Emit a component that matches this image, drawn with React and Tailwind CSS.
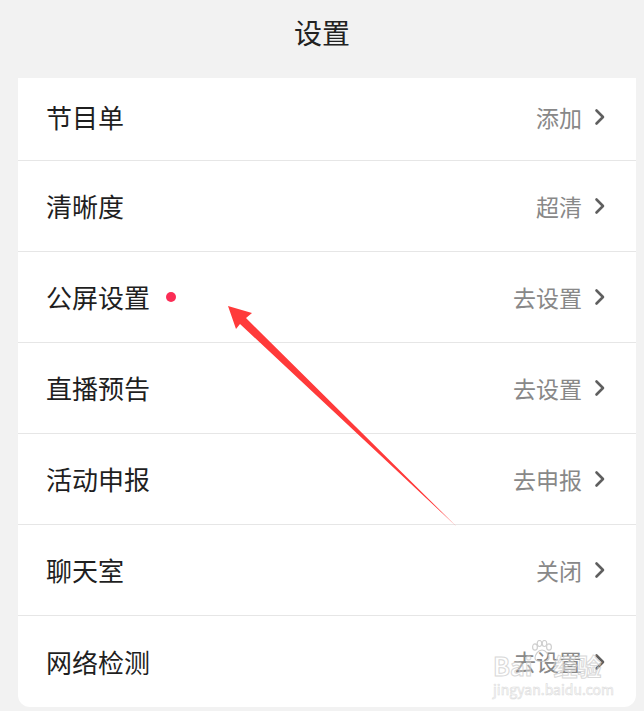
const rows = [
  { label: "节目单", value: "添加" },
  { label: "清晰度", value: "超清" },
  { label: "公屏设置", value: "去设置", dot: true },
  { label: "直播预告", value: "去设置" },
  { label: "活动申报", value: "去申报" },
  { label: "聊天室", value: "关闭" },
  { label: "网络检测", value: "去设置" },
];

function Chevron() {
  return (
    <svg width="12" height="18" viewBox="0 0 12 18" fill="none" className="ml-[12px]">
      <path d="M2.5 2.5l6.5 6.5-6.5 6.5" stroke="#5f5f5f" strokeWidth="2.6" strokeLinecap="round" strokeLinejoin="round" />
    </svg>
  );
}

function Paw() {
  return (
    <svg width="22" height="34" viewBox="0 0 22 34" fill="none" stroke="#c4c4c4" strokeWidth="1.2">
      <ellipse cx="4" cy="7" rx="2.4" ry="3.2" />
      <ellipse cx="8.5" cy="3.5" rx="2.3" ry="3" />
      <ellipse cx="13.5" cy="3.5" rx="2.3" ry="3" />
      <ellipse cx="18" cy="7" rx="2.4" ry="3.2" />
      <path d="M11 10c-4 0-7 5-7 8 0 3 3 3.5 7 3.5s7-.5 7-3.5c0-3-3-8-7-8z" />
    </svg>
  );
}

export default function App() {
  return (
    <div
      className="relative w-[644px] h-[711px] overflow-hidden bg-[#f2f2f2]"
      style={{ fontFamily: '"Noto Sans CJK SC", "Noto Sans", sans-serif' }}
    >
      <div className="h-[78px] pt-[12px] text-center text-[28px] text-[#222] leading-[40px]">设置</div>

      <div className="mx-[18px] w-[618px] bg-white rounded-b-[12px]">
        {rows.map((r, i) => (
          <div
            key={r.label}
            className={
              "flex items-center pl-[28px] pr-[30px] " +
              (i === 0 ? "h-[83px] pb-[4px] " : "h-[91px] ") +
              (i < rows.length - 1 ? "border-b border-[#e6e6e6]" : "")
            }
          >
            <span className="text-[26px] text-[#1f1f1f] leading-none">{r.label}</span>
            {r.dot && <span className="ml-[16px] w-[10px] h-[10px] rounded-full bg-[#fb2d55]" />}
            <span className="ml-auto text-[23px] text-[#888] leading-none">{r.value}</span>
            <Chevron />
          </div>
        ))}
      </div>

      {/* annotation arrow */}
      <svg className="absolute left-0 top-0 pointer-events-none" width="644" height="711">
        <polygon points="228,306 252,313 246,318 457,527 240,324 236,329" fill="#ff3a3a" />
      </svg>

      {/* watermark */}
      <div className="absolute left-[493px] top-[640px] flex flex-col pointer-events-none opacity-80">
        <div className="flex items-end h-[38px]">
          <span
            className="text-[25px] leading-none text-white/40 font-bold"
            style={{ WebkitTextStroke: "1px #cfcfcf" }}
          >
            Bai
          </span>
          <div className="self-start -ml-[1px]">
            <Paw />
          </div>
          <span
            className="text-[24px] leading-none text-white/40 font-bold"
            style={{ WebkitTextStroke: "1px #cfcfcf" }}
          >
            经验
          </span>
        </div>
        <div
          className="mt-[4px] text-[14px] leading-none text-white/40"
          style={{ WebkitTextStroke: "0.6px #d4d4d4" }}
        >
          jingyan.baidu.com
        </div>
      </div>
    </div>
  );
}
